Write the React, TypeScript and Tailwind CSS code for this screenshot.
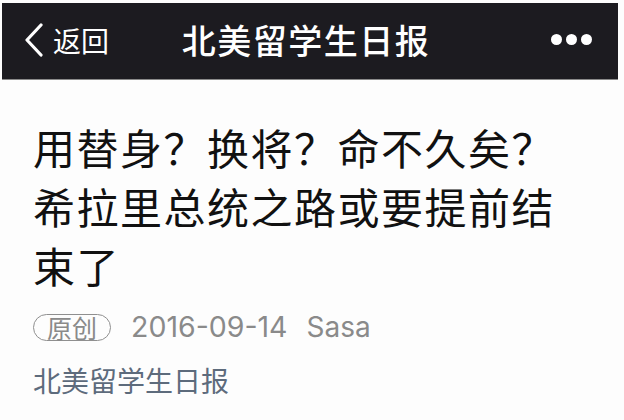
import React from 'react';

const cjk = { fontFamily: '"Noto Sans CJK SC", "Noto Sans", sans-serif' };
const latin = { fontFamily: 'Inter, "Noto Sans CJK SC", sans-serif' };

export default function App() {
  return (
    <div className="w-[624px] h-[420px] bg-[#fdfdfd] overflow-hidden" style={cjk}>
      {/* Top nav bar */}
      <div className="ml-[2px] mt-[3px] w-[616px] h-[77px] bg-[#1c1b20] border-b border-[#8a8a8a] flex items-center relative">
        <div className="flex items-center pl-[21px]">
          <svg width="22" height="34" viewBox="0 0 22 34" className="mt-[-2px]">
            <path d="M18 2 L4 17 L18 32" fill="none" stroke="#ffffff" strokeWidth="3.2" strokeLinecap="round" strokeLinejoin="round" />
          </svg>
          <span className="text-white text-[28px] leading-none ml-[8px] mt-[-2px]">返回</span>
        </div>
        <div className="absolute left-0 right-0 top-0 bottom-0 flex items-center justify-center pointer-events-none">
          <span className="text-white text-[34px] font-medium leading-none ml-[-8px] mt-[-2px] tracking-[1.5px]">北美留学生日报</span>
        </div>
        <div className="ml-auto mr-[26px] flex items-center gap-[4px] mt-[-3px]">
          <span className="w-[11px] h-[11px] rounded-full bg-white" />
          <span className="w-[11px] h-[11px] rounded-full bg-white" />
          <span className="w-[11px] h-[11px] rounded-full bg-white" />
        </div>
      </div>

      {/* Article */}
      <div className="pl-[33px] pr-[30px]">
        <h1 className="mt-[37px] text-[42px] leading-[59px] tracking-[1.5px] text-[#111111] font-normal">
          用替身？换将？命不久矣？
          <br />
          希拉里总统之路或要提前结
          <br />
          束了
        </h1>

        <div className="mt-[19px] flex items-center text-[#8a8a8a]">
          <span className="h-[27px] px-[13px] border border-[#8f8f8f] rounded-full text-[25px] leading-none flex items-center">原创</span>
          <span className="ml-[20px] text-[28.5px] leading-none" style={latin}>2016-09-14</span>
          <span className="ml-[19px] text-[28px] leading-none" style={latin}>Sasa</span>
        </div>

        <div className="mt-[24px] text-[28px] leading-none text-[#5d6b7c]">北美留学生日报</div>
      </div>
    </div>
  );
}
